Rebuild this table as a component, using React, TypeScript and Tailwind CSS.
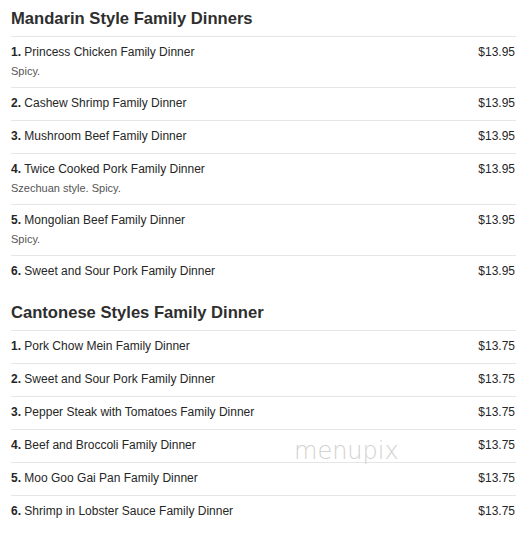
import React from 'react';

type Item = { num: string; name: string; price: string; desc?: string };

const mandarin: Item[] = [
  { num: '1.', name: 'Princess Chicken Family Dinner', price: '$13.95', desc: 'Spicy.' },
  { num: '2.', name: 'Cashew Shrimp Family Dinner', price: '$13.95' },
  { num: '3.', name: 'Mushroom Beef Family Dinner', price: '$13.95' },
  { num: '4.', name: 'Twice Cooked Pork Family Dinner', price: '$13.95', desc: 'Szechuan style. Spicy.' },
  { num: '5.', name: 'Mongolian Beef Family Dinner', price: '$13.95', desc: 'Spicy.' },
  { num: '6.', name: 'Sweet and Sour Pork Family Dinner', price: '$13.95' },
];

const cantonese: Item[] = [
  { num: '1.', name: 'Pork Chow Mein Family Dinner', price: '$13.75' },
  { num: '2.', name: 'Sweet and Sour Pork Family Dinner', price: '$13.75' },
  { num: '3.', name: 'Pepper Steak with Tomatoes Family Dinner', price: '$13.75' },
  { num: '4.', name: 'Beef and Broccoli Family Dinner', price: '$13.75' },
  { num: '5.', name: 'Moo Goo Gai Pan Family Dinner', price: '$13.75' },
  { num: '6.', name: 'Shrimp in Lobster Sauce Family Dinner', price: '$13.75' },
];

function MenuRow({ item }: { item: Item }) {
  return (
    <div className="border-t border-[#e6e6e6] pt-[8px] pb-[9px]">
      <div className="flex justify-between text-[12px] leading-[15px] text-[#262626]">
        <span>
          <span className="font-bold">{item.num}</span> {item.name}
        </span>
        <span className="pr-[1px]">{item.price}</span>
      </div>
      {item.desc && (
        <p className="mt-[5px] text-[11px] leading-[13px] text-[#555]">{item.desc}</p>
      )}
    </div>
  );
}

function Section({ title, items }: { title: string; items: Item[] }) {
  return (
    <section>
      <h2 className="text-[16.6px] leading-[20px] font-bold text-[#2e2e2e] pt-[1px] pb-[7px]">{title}</h2>
      {items.map((item) => (
        <MenuRow key={item.num} item={item} />
      ))}
    </section>
  );
}

export default function App() {
  return (
    <div
      className="relative w-[527px] h-[537px] overflow-hidden bg-white px-[11px] pt-[8px]"
      style={{ fontFamily: '"Liberation Sans", Arial, sans-serif' }}
    >
      <div className="flex flex-col gap-[14px]">
        <Section title="Mandarin Style Family Dinners" items={mandarin} />
        <Section title="Cantonese Styles Family Dinner" items={cantonese} />
      </div>
      <span
        className="pointer-events-none absolute left-[294px] top-[436px] text-[24px] leading-[30px] font-extralight text-[#d2d2d2]"
        style={{ fontFamily: '"DejaVu Sans", sans-serif' }}
      >
        menupix
      </span>
    </div>
  );
}
